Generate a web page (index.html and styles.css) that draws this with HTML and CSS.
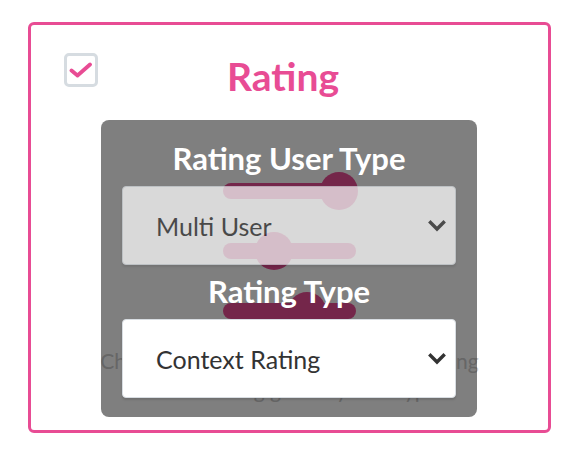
FILE: index.html
```html
<!DOCTYPE html>
<html lang="en">
<head>
  <meta charset="UTF-8" />
  <title>Rating</title>
  <link rel="stylesheet" href="styles.css">
</head>
<body>
  <div class="card">
    <div class="header">
      <span class="check">
        <svg width="24" height="18" viewBox="0 0 24 18"><path d="M2.5 9.5 L8.5 14.5 L21 3.5" fill="none" stroke="#e84c94" stroke-width="3.8" stroke-linecap="round" stroke-linejoin="round"/></svg>
      </span>
      <h1 class="title">Rating</h1>
    </div>

    <div class="sliders">
      <div class="track"><span class="thumb" style="left: 87%"></span></div>
      <div class="track"><span class="thumb" style="left: 38%"></span></div>
      <div class="track"><span class="thumb" style="left: 63%"></span></div>
    </div>

    <p class="note">Choose how many users can give a rating and the rating given by user type.</p>

    <div class="panel">
      <label class="label">Rating User Type</label>
      <div class="field">
        <select class="select" disabled>
          <option>Multi User</option>
        </select>
        <svg class="chev faded" width="18" height="12" viewBox="0 0 18 12"><path d="M2.5 2.5 L9 9 L15.5 2.5" fill="none" stroke="#333" stroke-width="3.4" stroke-linecap="square"/></svg>
      </div>
      <label class="label second">Rating Type</label>
      <div class="field">
        <select class="select">
          <option>Context Rating</option>
        </select>
        <svg class="chev" width="18" height="12" viewBox="0 0 18 12"><path d="M2.5 2.5 L9 9 L15.5 2.5" fill="none" stroke="#333" stroke-width="3.4" stroke-linecap="square"/></svg>
      </div>
    </div>
  </div>
</body>
</html>
```

FILE: styles.css
```css
* {
  box-sizing: border-box;
}
body {
  margin: 0;
  background: #ffffff;
  font-family: 'Lato', sans-serif;
}

.card {
  position: relative;
  margin: 22px 25px 0 28px;
  height: 411px;
  border: 3px solid #e84c94;
  border-radius: 6px;
}

.header {
  display: flex;
  align-items: flex-start;
  padding: 28px 80px 0 33px;
}

.check {
  width: 34px;
  height: 34px;
  border: 3px solid #d6dce1;
  border-radius: 5px;
  display: flex;
  align-items: center;
  justify-content: center;
}

.title {
  flex: 1;
  margin: 0;
  padding-top: 3px;
  text-align: center;
  font-size: 39px;
  font-weight: 700;
  line-height: 40px;
  color: #e84c94;
}

.sliders {
  display: flex;
  flex-direction: column;
  align-items: center;
  gap: 22px;
  margin-top: 76px;
}

.track {
  position: relative;
  width: 133px;
  height: 38px;
}

.track::before {
  content: "";
  position: absolute;
  left: 0;
  right: 0;
  top: 11px;
  height: 16px;
  border-radius: 8px;
  background: #e84c94;
}

.thumb {
  position: absolute;
  top: 0;
  width: 38px;
  height: 38px;
  margin-left: -19px;
  border-radius: 50%;
  background: #e84c94;
}

.note {
  margin: 16px auto 0;
  max-width: 380px;
  text-align: center;
  font-size: 21px;
  line-height: 29px;
  color: #cccccc;
}

.panel {
  position: absolute;
  left: 70px;
  top: 95px;
  width: 376px;
  height: 297px;
  padding: 20px 21px 0;
  border-radius: 8px;
  background: rgba(0, 0, 0, 0.5);
  display: flex;
  flex-direction: column;
}

.label {
  text-align: center;
  font-size: 31px;
  font-weight: 700;
  line-height: 36px;
  color: #ffffff;
}

.label.second {
  margin-top: 8px;
}

.field {
  position: relative;
  margin-top: 10px;
}

.select {
  display: block;
  width: 100%;
  height: 79px;
  padding: 0 40px 0 33px;
  appearance: none;
  -webkit-appearance: none;
  border: 1px solid #d8dde2;
  border-radius: 4px;
  background: #ffffff;
  box-shadow: 0 2px 2px rgba(0, 0, 0, 0.12);
  font-family: 'Lato', sans-serif;
  font-size: 25px;
  color: #333333;
}

.select:disabled {
  opacity: 0.7;
  color: #333333;
}

.chev {
  position: absolute;
  right: 10px;
  top: 34px;
}

.chev.faded {
  opacity: 0.85;
}
```
